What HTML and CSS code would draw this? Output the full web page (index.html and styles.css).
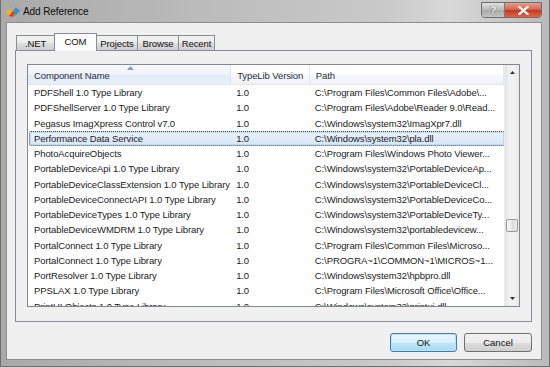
FILE: index.html
```html
<!DOCTYPE html>
<html lang="en">
<head>
    <meta charset="UTF-8">
    <title>Add Reference</title>
    <link rel="stylesheet" href="styles.css">
</head>
<body>
    <div class="window">
        <div class="titlebar">
            <svg class="app-icon" width="15" height="12" viewBox="0 0 15 12">
                <polygon points="0,6 4,2 7,5 3,10" fill="#f2b318"/>
                <polygon points="3,10 7,5 9,7 6,11" fill="#e0322a"/>
                <polygon points="7,5 10,1 14,5 10,9" fill="#3e8fd6"/>
                <polygon points="9,7 10,9 7,11" fill="#4aaa3c"/>
            </svg>
            <span class="title">Add Reference</span>
            <div class="caption-buttons">
                <div class="cap-btn help">?</div>
                <div class="cap-btn close">
                    <svg width="11" height="9" viewBox="0 0 11 9">
                        <path d="M1.5 1 L9.5 8 M9.5 1 L1.5 8" stroke="#fff" stroke-width="2.2" stroke-linecap="square"/>
                    </svg>
                </div>
            </div>
        </div>

        <div class="client">
            <div class="tabs-area">
                <div class="tabs">
                    <div class="tab tab-net">.NET</div>
                    <div class="tab tab-com active">COM</div>
                    <div class="tab tab-projects">Projects</div>
                    <div class="tab tab-browse">Browse</div>
                    <div class="tab tab-recent">Recent</div>
                </div>

                <div class="tab-panel">
                    <div class="listview">
                        <div class="list-main">
                            <div class="list-header">
                                <div class="col-head col-name sorted">Component Name
                                    <svg class="sort-arrow" width="7" height="4" viewBox="0 0 7 4"><polygon points="0,4 3.5,0 7,4" fill="#8a9fb8"/></svg>
                                </div>
                                <div class="col-head col-ver">TypeLib Version</div>
                                <div class="col-head col-path">Path</div>
                            </div>
                            <div class="list-body">
                                <div class="row"><span class="cell col-name">PDFShell 1.0 Type Library</span><span class="cell col-ver">1.0</span><span class="cell col-path">C:\Program Files\Common Files\Adobe\...</span></div>
                                <div class="row"><span class="cell col-name">PDFShellServer 1.0 Type Library</span><span class="cell col-ver">1.0</span><span class="cell col-path">C:\Program Files\Adobe\Reader 9.0\Read...</span></div>
                                <div class="row"><span class="cell col-name">Pegasus ImagXpress Control v7.0</span><span class="cell col-ver">1.0</span><span class="cell col-path">C:\Windows\system32\ImagXpr7.dll</span></div>
                                <div class="row selected"><span class="cell col-name">Performance Data Service</span><span class="cell col-ver">1.0</span><span class="cell col-path">C:\Windows\system32\pla.dll</span></div>
                                <div class="row"><span class="cell col-name">PhotoAcquireObjects</span><span class="cell col-ver">1.0</span><span class="cell col-path">C:\Program Files\Windows Photo Viewer...</span></div>
                                <div class="row"><span class="cell col-name">PortableDeviceApi 1.0 Type Library</span><span class="cell col-ver">1.0</span><span class="cell col-path">C:\Windows\system32\PortableDeviceAp...</span></div>
                                <div class="row"><span class="cell col-name">PortableDeviceClassExtension 1.0 Type Library</span><span class="cell col-ver">1.0</span><span class="cell col-path">C:\Windows\system32\PortableDeviceCl...</span></div>
                                <div class="row"><span class="cell col-name">PortableDeviceConnectAPI 1.0 Type Library</span><span class="cell col-ver">1.0</span><span class="cell col-path">C:\Windows\system32\PortableDeviceCo...</span></div>
                                <div class="row"><span class="cell col-name">PortableDeviceTypes 1.0 Type Library</span><span class="cell col-ver">1.0</span><span class="cell col-path">C:\Windows\system32\PortableDeviceTy...</span></div>
                                <div class="row"><span class="cell col-name">PortableDeviceWMDRM 1.0 Type Library</span><span class="cell col-ver">1.0</span><span class="cell col-path">C:\Windows\system32\portabledevicew...</span></div>
                                <div class="row"><span class="cell col-name">PortalConnect 1.0 Type Library</span><span class="cell col-ver">1.0</span><span class="cell col-path">C:\Program Files\Common Files\Microso...</span></div>
                                <div class="row"><span class="cell col-name">PortalConnect 1.0 Type Library</span><span class="cell col-ver">1.0</span><span class="cell col-path">C:\PROGRA~1\COMMON~1\MICROS~1...</span></div>
                                <div class="row"><span class="cell col-name">PortResolver 1.0 Type Library</span><span class="cell col-ver">1.0</span><span class="cell col-path">C:\Windows\system32\hpbpro.dll</span></div>
                                <div class="row"><span class="cell col-name">PPSLAX 1.0 Type Library</span><span class="cell col-ver">1.0</span><span class="cell col-path">C:\Program Files\Microsoft Office\Office...</span></div>
                                <div class="row"><span class="cell col-name">PrintUI Objects 1.0 Type Library</span><span class="cell col-ver">1.0</span><span class="cell col-path">C:\Windows\system32\printui.dll</span></div>
                            </div>
                        </div>
                        <div class="scrollbar">
                            <div class="sb-arrow">
                                <svg width="5" height="3" viewBox="0 0 5 3"><polygon points="0,3 2.5,0 5,3" fill="#333"/></svg>
                            </div>
                            <div class="sb-track">
                                <div class="sb-thumb"></div>
                            </div>
                            <div class="sb-arrow">
                                <svg width="5" height="3" viewBox="0 0 5 3"><polygon points="0,0 2.5,3 5,0" fill="#333"/></svg>
                            </div>
                        </div>
                    </div>
                </div>
            </div>

            <div class="dialog-buttons">
                <button class="btn default">OK</button>
                <button class="btn">Cancel</button>
            </div>
        </div>
    </div>
</body>
</html>
```

FILE: styles.css
```css
body {
    margin: 0;
    padding: 0;
    font-family: "Liberation Sans", Arial, sans-serif;
    font-size: 9.5px;
    letter-spacing: -0.1px;
    color: #1b1b1b;
    background: #9a9a9a;
    overflow: hidden;
}

.window {
    width: 550px;
    height: 367px;
    box-sizing: border-box;
    display: flex;
    flex-direction: column;
    padding: 0 7px 6px 5px;
    background: linear-gradient(to right, #a9a9a9 0%, #bdbdbd 40%, #c9c9c9 70%, #d8d8d8 82%, #bababa 100%);
    border-left: 1px solid #6e6e6e;
    border-right: 1px solid #6e6e6e;
    border-bottom: 1px solid #6e6e6e;
}

.titlebar {
    height: 22px;
    display: flex;
    align-items: center;
}

.app-icon {
    margin-right: 2px;
    margin-top: 1px;
}

.title {
    font-size: 10px;
    color: #0c0c0c;
    margin-top: 1px;
}

.caption-buttons {
    display: flex;
    margin-left: auto;
    align-self: flex-start;
    margin-top: 2px;
    border: 1px solid #6d6d6d;
    border-radius: 0 0 4px 4px;
    overflow: hidden;
    height: 14px;
}

.cap-btn {
    height: 14px;
    display: flex;
    align-items: center;
    justify-content: center;
}

.cap-btn.help {
    width: 22px;
    background: linear-gradient(to bottom, #e2e2e2, #b9b9b9 50%, #a8a8a8 51%, #c4c4c4);
    border-right: 1px solid #7a7a7a;
    color: #fff;
    font-size: 11px;
    font-weight: bold;
    text-shadow: 0 0 1px #444, 0 0 1px #444;
}

.cap-btn.close {
    width: 36px;
    background: linear-gradient(to bottom, #e8a08e, #d4604a 48%, #c6381f 52%, #d9684c);
}

.client {
    flex: 1;
    display: flex;
    flex-direction: column;
    background: #f0f0f0;
    border: 1px solid #8d8d8d;
}

.tabs-area {
    margin: 10px 9px 0 8px;
}

.tabs {
    display: flex;
    align-items: flex-end;
    padding-left: 1px;
    height: 18px;
    position: relative;
    z-index: 1;
    margin-bottom: -1px;
}

.tab {
    height: 15px;
    box-sizing: border-box;
    border: 1px solid #898c95;
    border-bottom: none;
    margin-right: -1px;
    background: linear-gradient(to bottom, #f2f2f2, #ebebeb 50%, #dddddd 51%, #cfcfcf);
    display: flex;
    align-items: center;
    justify-content: center;
    color: #111;
    margin-bottom: 1px;
}

.tab-net { width: 39px; }
.tab-com { width: 43px; }
.tab-projects { width: 42px; }
.tab-browse { width: 42px; }
.tab-recent { width: 37px; }

.tab.active {
    height: 18px;
    background: #fcfcfc;
    align-items: flex-start;
    padding-top: 2px;
    margin-bottom: 0;
    position: relative;
}

.tab-panel {
    height: 272px;
    box-sizing: border-box;
    border: 1px solid #898c95;
    background: #f0f0f0;
    padding: 13px 11px 14px 11px;
}

.listview {
    height: 243px;
    box-sizing: border-box;
    border: 1px solid #828790;
    background: #fff;
    display: flex;
}

.list-main {
    flex: 1;
    display: flex;
    flex-direction: column;
    overflow: hidden;
}

.list-header {
    display: flex;
    height: 20px;
    box-sizing: border-box;
    border-bottom: 1px solid #e5e5e5;
    background: linear-gradient(to bottom, #ffffff, #ffffff 50%, #f7f8fa 51%, #f1f2f4);
}

.col-head {
    box-sizing: border-box;
    padding: 5px 0 0 6px;
    border-right: 1px solid #e3e8ef;
    color: #1e2f45;
    white-space: nowrap;
    position: relative;
}

.col-head.sorted {
    background: linear-gradient(to bottom, #f4f8fc, #eef4fa 50%, #e3ecf6 51%, #e7eff8);
    border-right-color: #d6e2ef;
}

.sort-arrow {
    position: absolute;
    top: 1px;
    left: 99px;
}

.col-name {
    width: 204px;
}

.col-ver {
    width: 79px;
}

.col-path {
    width: 195px;
}

.list-body {
    flex: 1;
    overflow: hidden;
}

.row {
    display: flex;
    height: 15.25px;
    align-items: center;
    box-sizing: border-box;
    margin-left: 1px;
}

.cell {
    box-sizing: border-box;
    padding-left: 5px;
    white-space: nowrap;
    overflow: hidden;
}

.row .col-name {
    width: 203px;
}

.row.selected {
    width: 476px;
    border: 1px dotted #3a4a5e;
    border-radius: 2px;
    background: linear-gradient(to bottom, #eaf2fc, #d6e6fa);
    box-shadow: inset 0 0 0 1px #c3d8f3;
}

.row.selected .col-name {
    width: 202px;
    padding-left: 4px;
}

.scrollbar {
    width: 14px;
    display: flex;
    flex-direction: column;
    background: linear-gradient(to right, #e3e3e3, #f1f1f1 30%, #f1f1f1 70%, #e8e8e8);
    border-left: 1px solid #ececec;
}

.sb-arrow {
    height: 15px;
    display: flex;
    align-items: center;
    justify-content: center;
}

.sb-track {
    flex: 1;
    padding-top: 139px;
}

.sb-thumb {
    height: 13px;
    margin: 0 1px;
    box-sizing: border-box;
    border: 1px solid #989898;
    border-radius: 2px;
    background: linear-gradient(to right, #f7f7f7, #e6e6e6 50%, #d9d9d9 51%, #ececec);
}

.dialog-buttons {
    display: flex;
    justify-content: flex-end;
    gap: 7px;
    margin: 11px 9px 0 0;
}

.btn {
    width: 68px;
    height: 19px;
    box-sizing: border-box;
    font-family: "Liberation Sans", Arial, sans-serif;
    font-size: 9.5px;
    color: #111;
    border: 1px solid #707070;
    border-radius: 3px;
    background: linear-gradient(to bottom, #f2f2f2, #ebebeb 50%, #dddddd 51%, #cfcfcf);
    padding: 0;
}

.btn.default {
    width: 67px;
    border-color: #3c7fb1;
    box-shadow: inset 0 0 0 1px #bde3f6;
    background: linear-gradient(to bottom, #eaf6fd, #d9f0fc 50%, #bee6fd 51%, #a7d9f5);
}
```
